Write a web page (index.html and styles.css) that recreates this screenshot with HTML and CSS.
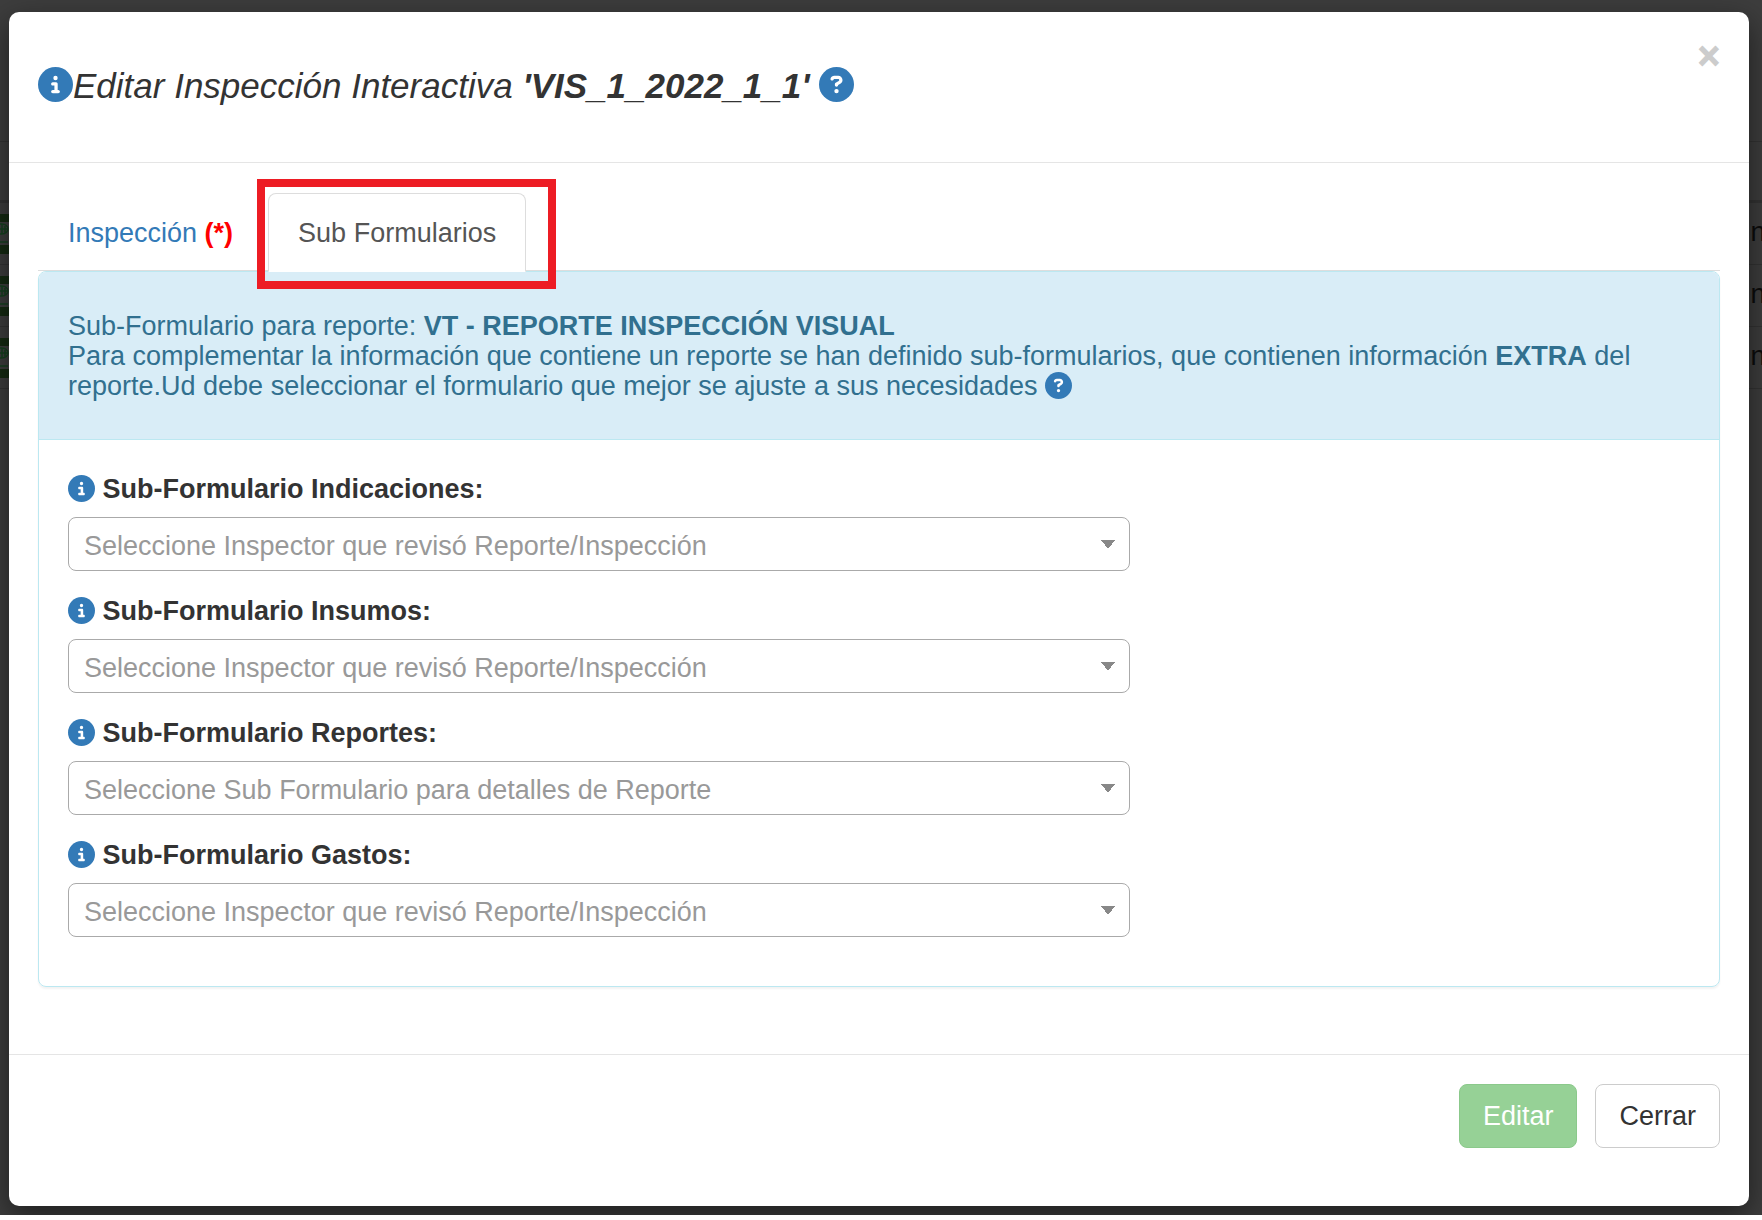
FILE: index.html
```
<!DOCTYPE html>
<html lang="es">
<head>
    <meta charset="UTF-8">
    <meta name="viewport" content="width=device-width, initial-scale=1.0">
    <title>Editar Inspección Interactiva</title>
    <link rel="stylesheet" href="styles.css">
</head>
<body>
    <svg width="0" height="0" class="sprite">
        <symbol id="info" viewBox="0 0 512 512">
            <circle cx="256" cy="256" r="256" fill="#337ab7"/>
            <path fill="#fff" d="M216 336h24V272H216c-13.3 0-24-10.7-24-24s10.7-24 24-24h48c13.3 0 24 10.7 24 24v88h8c13.3 0 24 10.7 24 24s-10.7 24-24 24H216c-13.3 0-24-10.7-24-24s10.7-24 24-24zm40-208a32 32 0 1 1 0 64 32 32 0 1 1 0-64z"/>
        </symbol>
        <symbol id="question" viewBox="0 0 512 512">
            <circle cx="256" cy="256" r="256" fill="#337ab7"/>
            <path fill="#fff" d="M169.8 165.3c7.9-22.3 29.1-37.3 52.8-37.3h58.3c34.9 0 63.1 28.3 63.1 63.1c0 22.6-12.1 43.5-31.7 54.8L280 264.4c-.2 13-10.9 23.6-24 23.6c-13.3 0-24-10.7-24-24V250.5c0-8.6 4.6-16.5 12.1-20.8l44.3-25.4c4.7-2.7 7.6-7.7 7.6-13.1c0-8.4-6.8-15.1-15.1-15.1H222.6c-3.4 0-6.4 2.1-7.5 5.3l-.4 1.2c-4.4 12.5-18.2 19-30.6 14.6s-19-18.2-14.6-30.6l.3-1.2zM224 352a32 32 0 1 1 64 0 32 32 0 1 1-64 0z"/>
        </symbol>
        <symbol id="globe" viewBox="0 0 16 22">
            <path fill="none" stroke="#16401f" stroke-width="1.5" d="M4 2h3a6 5 0 0 1 0 10H4M7 2v10M10 2v10M4 7h9M4 20h9"/>
        </symbol>
    </svg>

    <!-- listado detrás del modal -->
    <div class="listado">
        <div class="filtro"></div>
        <div class="cabecera"></div>
        <div class="fila"><div class="boton"><svg><use href="#globe"/></svg></div><span>In</span></div>
        <div class="fila"><div class="boton"><svg><use href="#globe"/></svg></div><span>In</span></div>
        <div class="fila"><div class="boton"><svg><use href="#globe"/></svg></div><span>In</span></div>
    </div>

    <div class="modal">
        <div class="modal-header">
            <h4><svg class="icon"><use href="#info"/></svg><i>Editar Inspección Interactiva <b>'VIS_1_2022_1_1'</b></i> <svg class="icon"><use href="#question"/></svg></h4>
            <button type="button" class="close" aria-label="Cerrar ventana">×</button>
        </div>

        <div class="modal-body">
            <nav class="tabs">
                <a href="#inspeccion">Inspección <b>(*)</b></a>
                <a href="#subformularios" class="active">Sub Formularios<span class="marco"></span></a>
            </nav>

            <div class="panel" id="subformularios">
                <div class="panel-heading">
                    Sub-Formulario para reporte: <b>VT - REPORTE INSPECCIÓN VISUAL</b><br>
                    Para complementar la información que contiene un reporte se han definido sub-formularios, que contienen información <b>EXTRA</b> del reporte.Ud debe seleccionar el formulario que mejor se ajuste a sus necesidades <svg class="icon"><use href="#question"/></svg>
                </div>
                <form class="panel-body">
                    <div class="campo">
                        <label for="indicaciones"><svg class="icon"><use href="#info"/></svg> Sub-Formulario Indicaciones:</label>
                        <select id="indicaciones"><option>Seleccione Inspector que revisó Reporte/Inspección</option></select>
                    </div>
                    <div class="campo">
                        <label for="insumos"><svg class="icon"><use href="#info"/></svg> Sub-Formulario Insumos:</label>
                        <select id="insumos"><option>Seleccione Inspector que revisó Reporte/Inspección</option></select>
                    </div>
                    <div class="campo">
                        <label for="reportes"><svg class="icon"><use href="#info"/></svg> Sub-Formulario Reportes:</label>
                        <select id="reportes"><option>Seleccione Sub Formulario para detalles de Reporte</option></select>
                    </div>
                    <div class="campo">
                        <label for="gastos"><svg class="icon"><use href="#info"/></svg> Sub-Formulario Gastos:</label>
                        <select id="gastos"><option>Seleccione Inspector que revisó Reporte/Inspección</option></select>
                    </div>
                </form>
            </div>
        </div>

        <div class="modal-footer">
            <button type="button" class="btn btn-success" disabled>Editar</button>
            <button type="button" class="btn">Cerrar</button>
        </div>
    </div>
</body>
</html>
```

FILE: styles.css
```
* {
    box-sizing: border-box;
}
html {
    background-color: #fff;
}
body {
    position: relative;
    margin: 0;
    padding: 12px 13px 9px 9px;
    font-family: "Liberation Sans", Arial, sans-serif;
    font-size: 27px;
    line-height: 30px;
    color: #333;
    background-color: #3d3d3d;
    overflow: hidden;
}
.sprite {
    position: absolute;
}
.listado {
    position: absolute;
    top: 0;
    left: 0;
    right: 0;
    overflow: hidden;
}
.filtro {
    height: 142px;
    border-bottom: 1px solid #333;
}
.cabecera {
    height: 61px;
    border-bottom: 3px solid #333;
}
.fila {
    display: flex;
    justify-content: space-between;
    height: 62px;
    padding-top: 11px;
    border-bottom: 1px solid #333;
    color: #0c0c0c;
}
.fila span {
    width: 19px;
    line-height: 37px;
}
.boton {
    width: 60px;
    height: 40px;
    border-top: 8px solid #152a12;
    border-bottom: 9px solid #152a12;
}
.boton svg {
    display: block;
    width: 16px;
    height: 22px;
    margin-left: -5px;
}
.modal {
    position: relative;
    background-color: #fff;
    border-radius: 10px;
    box-shadow: 0 10px 30px rgba(0, 0, 0, 0.5);
}
.modal-header {
    display: flex;
    justify-content: space-between;
    padding: 29px;
    height: 151px;
    border-bottom: 1px solid #e5e5e5;
}
h4 {
    margin: 25px 0 0;
    font-size: 35px;
    font-weight: normal;
    line-height: 40px;
}
.icon {
    width: 27px;
    height: 27px;
    vertical-align: -4px;
}
h4 .icon {
    width: 35px;
    height: 35px;
    vertical-align: -4px;
}
.close {
    align-self: flex-start;
    padding: 0;
    border: 0;
    background: none;
    color: #ccc;
    -webkit-text-stroke: 1px #ccc;
    font-family: inherit;
    font-size: 38px;
    font-weight: bold;
    line-height: 30px;
}
.modal-body {
    padding: 30px 29px 67px;
}
.tabs {
    display: flex;
    gap: 5px;
    border-bottom: 1px solid #ddd;
}
.tabs a {
    position: relative;
    height: 79px;
    padding: 24px 29px;
    margin-bottom: -2px;
    border: 1px solid transparent;
    border-radius: 8px 8px 0 0;
    color: #337ab7;
    text-decoration: none;
}
.tabs b {
    color: red;
}
.tabs .active {
    color: #555;
    background-color: #fff;
    border-color: #ddd;
    border-bottom-color: #fff;
    z-index: 1;
}
.marco {
    position: absolute;
    top: -15px;
    left: -12px;
    right: -31px;
    bottom: -18px;
    border: 8px solid #ed1c24;
}
.panel {
    border: 1px solid #bce8f1;
    border-radius: 8px;
    box-shadow: 0 2px 2px rgba(0, 0, 0, 0.05);
}
.panel-heading {
    padding: 39px 29px 38px;
    color: #31708f;
    background-color: #d9edf7;
    border-bottom: 1px solid #bce8f1;
    border-radius: 7px 7px 0 0;
}
.panel-body {
    padding: 29px 29px 49px;
}
.campo {
    width: 65.5%;
}
.campo + .campo {
    margin-top: 20px;
}
label {
    display: block;
    height: 48px;
    padding-top: 5px;
    font-weight: bold;
}
select {
    display: block;
    width: 100%;
    height: 54px;
    padding: 3px 15px 0;
    appearance: none;
    border: 1px solid #aaa;
    border-radius: 8px;
    background-color: #fff;
    /* flecha: dos mitades de un triángulo */
    background-image: linear-gradient(to top right, transparent 50%, #888 50%), linear-gradient(to top left, transparent 50%, #888 50%);
    background-position: right 21px center, right 14px center;
    background-size: 7px 9px;
    background-repeat: no-repeat;
    color: #999;
    font-family: inherit;
    font-size: 27px;
}
.modal-footer {
    display: flex;
    justify-content: flex-end;
    gap: 18px;
    padding: 29px 29px 58px;
    border-top: 1px solid #e5e5e5;
}
.btn {
    height: 64px;
    padding: 0 23px;
    border: 1px solid #ccc;
    border-radius: 8px;
    background-color: #fff;
    color: #333;
    font-family: inherit;
    font-size: 27px;
}
.btn-success {
    color: #fff;
    background-color: #96d196;
    border-color: #8bc98b;
}
```
